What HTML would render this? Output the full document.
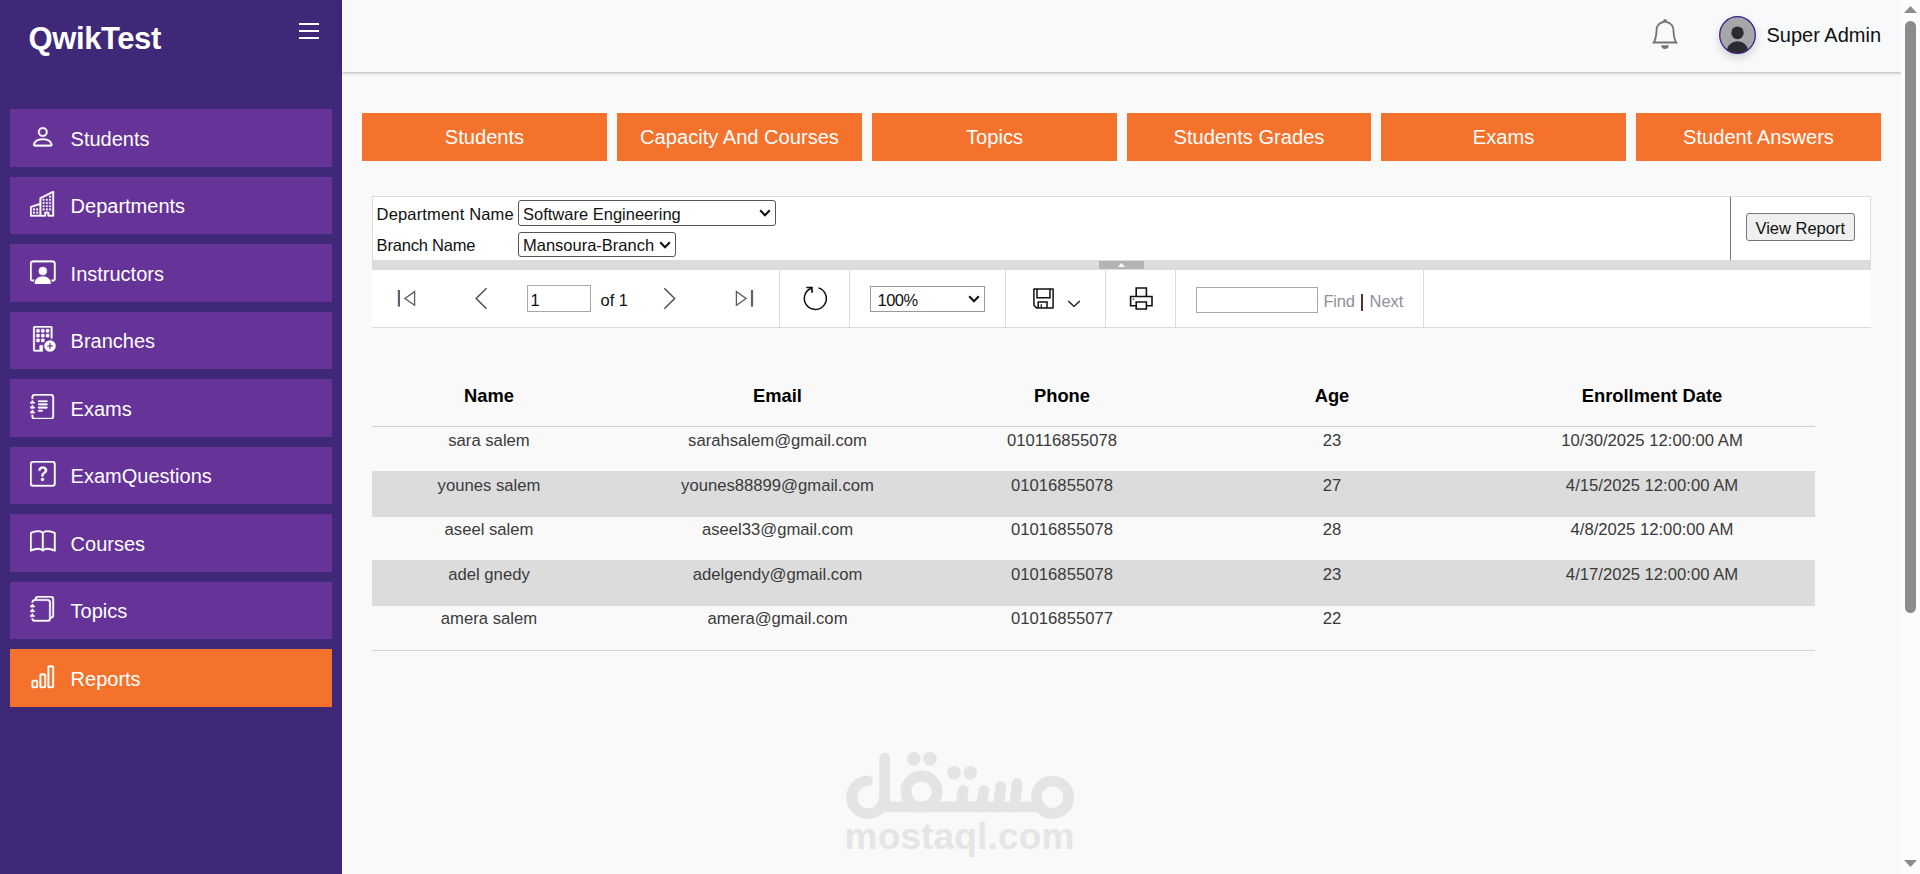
<!DOCTYPE html>
<html lang="en">
<head>
<meta charset="utf-8">
<title>QwikTest - Reports</title>
<style>
*{box-sizing:border-box;margin:0;padding:0}
html,body{width:1920px;height:874px;overflow:hidden;background:#f9f9f9;font-family:"Liberation Sans",sans-serif;}
body{position:relative}
.abs{position:absolute}
/* sidebar */
#side{position:absolute;left:0;top:0;width:342px;height:874px;background:#3f2878}
#logo{position:absolute;left:28.5px;top:20.5px;font-size:31px;letter-spacing:-0.4px;font-weight:bold;color:#fff;line-height:36px;white-space:nowrap}
#burger{position:absolute;left:299px;top:22px;width:20px;height:18px}
.nav{position:absolute;left:10px;width:322px;height:57.5px;background:#663399;color:#fff;font-size:20px;line-height:57.5px;white-space:nowrap}
.nav span{position:absolute;left:60.6px;top:1.5px}
.nav svg{position:absolute;left:20px;top:14.7px;width:25.6px;height:25.6px}
.nav.act{background:#f4722b}
/* header */
#head{position:absolute;left:342px;top:0;width:1560px;height:72px;background:#f8f9fa;box-shadow:0 1px 2px rgba(0,0,0,.16),0 2px 4px rgba(0,0,0,.10)}
#uname{position:absolute;left:1766.5px;top:22px;font-size:20px;line-height:26px;color:#111;white-space:nowrap}
#avatar{position:absolute;left:1377px;top:16px;width:37px;height:38px;border-radius:50%;box-shadow:0 4px 8px rgba(0,0,0,.16)}
#avatar svg{display:block}
/* tabs */
.tab{position:absolute;top:113px;width:245px;height:48px;background:#f4722b;color:#fff;font-size:20.1px;line-height:48px;text-align:center;white-space:nowrap}
/* report viewer */
#params{position:absolute;left:372px;top:196px;width:1499px;height:64px;background:#fff;border:1px solid #dcdcdc;border-bottom:none}
#split{position:absolute;left:372px;top:260px;width:1499px;height:10px;background:#dcdcdc}
#tool{position:absolute;left:372px;top:270px;width:1499px;height:58px;background:#fff;border-bottom:1px solid #dcdcdc}
.lbl{position:absolute;font-size:16.5px;color:#111;white-space:nowrap;line-height:20px}
.rv{font-size:16.5px;color:#111}
.sel{position:absolute;background:#fff;border:1px solid #555;border-radius:3px;font-size:16.5px;color:#111;white-space:nowrap;line-height:20px;padding-left:4px}
.chev{position:absolute;right:3.5px;top:8.3px;width:12px;height:8px}
.tdiv{position:absolute;top:0;width:1px;height:57px;background:#dcdcdc}
/* table */
.row{position:absolute;left:372px;width:1443px;height:45px}
.cell{position:absolute;font-size:16.67px;color:#3a3a3a;white-space:nowrap;text-align:center;transform:translateX(-50%);line-height:20px}
.hd{font-weight:bold;color:#000;font-size:18.33px}
/* scrollbar */
#sb{position:absolute;left:1901px;top:0;width:19px;height:874px;background:#fcfcfc}
</style>
</head>
<body>

<div id="side">
  <div id="logo">QwikTest</div>
  <svg id="burger" viewBox="0 0 20 18"><path d="M0 2h20M0 9h20M0 16h20" stroke="#fff" stroke-width="1.85" fill="none"/></svg>
  <div class="nav" style="top:109px"><svg viewBox="0 0 16 16" fill="#fff" stroke="#fff" stroke-width=".22"><path d="M8 8a3 3 0 1 0 0-6 3 3 0 0 0 0 6Zm2-3a2 2 0 1 1-4 0 2 2 0 0 1 4 0Zm4 8c0 1-1 1-1 1H3s-1 0-1-1 1-4 6-4 6 3 6 4Zm-1-.004c-.001-.246-.154-.986-.832-1.664C11.516 10.68 10.289 10 8 10c-2.29 0-3.516.68-4.168 1.332-.678.678-.83 1.418-.832 1.664h10Z"/></svg><span>Students</span></div>
  <div class="nav" style="top:176.5px"><svg viewBox="0 0 16 16" fill="#fff" stroke="#fff" stroke-width=".22"><path d="M14.763.075A.5.5 0 0 1 15 .5v15a.5.5 0 0 1-.5.5h-3a.5.5 0 0 1-.5-.5V14h-1v1.5a.5.5 0 0 1-.5.5h-9a.5.5 0 0 1-.5-.5V10a.5.5 0 0 1 .342-.474L6 7.64V4.5a.5.5 0 0 1 .276-.447l8-4a.5.5 0 0 1 .487.022ZM6 8.694 1 10.36V15h5V8.694ZM7 15h2v-1.5a.5.5 0 0 1 .5-.5h2a.5.5 0 0 1 .5.5V15h2V1.309l-7 3.5V15Z"/><path d="M2 11h1v1H2v-1Zm2 0h1v1H4v-1Zm-2 2h1v1H2v-1Zm2 0h1v1H4v-1Zm4-4h1v1H8V9Zm2 0h1v1h-1V9Zm-2 2h1v1H8v-1Zm2 0h1v1h-1v-1Zm2-2h1v1h-1V9Zm0 2h1v1h-1v-1ZM8 7h1v1H8V7Zm2 0h1v1h-1V7Zm2 0h1v1h-1V7ZM8 5h1v1H8V5Zm2 0h1v1h-1V5Zm2 0h1v1h-1V5Zm0-2h1v1h-1V3Z"/></svg><span>Departments</span></div>
  <div class="nav" style="top:244px"><svg viewBox="0 0 16 16" fill="#fff" stroke="#fff" stroke-width=".22"><path d="M4 16s-1 0-1-1 1-4 5-4 5 3 5 4-1 1-1 1H4Zm4-5.95a2.5 2.5 0 1 0 0-5 2.5 2.5 0 0 0 0 5Z"/><path d="M2 1a2 2 0 0 0-2 2v9.5A1.5 1.5 0 0 0 1.5 14h.653a5.373 5.373 0 0 1 .68-1H1.5a.5.5 0 0 1-.5-.5V3a1 1 0 0 1 1-1h12a1 1 0 0 1 1 1v9.5a.5.5 0 0 1-.5.5h-1.332c.294.336.522.682.678 1h.654a1.5 1.5 0 0 0 1.5-1.5V3a2 2 0 0 0-2-2H2Z"/></svg><span>Instructors</span></div>
  <div class="nav" style="top:311.5px"><svg viewBox="0 0 16 16" fill="#fff" stroke="#fff" stroke-width=".22"><path d="M12.5 16a3.5 3.5 0 1 0 0-7 3.5 3.5 0 0 0 0 7Zm.5-5v1h1a.5.5 0 0 1 0 1h-1v1a.5.5 0 0 1-1 0v-1h-1a.5.5 0 0 1 0-1h1v-1a.5.5 0 0 1 1 0Z"/><path d="M2 1a1 1 0 0 1 1-1h10a1 1 0 0 1 1 1v6.5a.5.5 0 0 1-1 0V1H3v14h3v-2.5a.5.5 0 0 1 .5-.5H8v4H3a1 1 0 0 1-1-1V1Z"/><path d="M4.5 2a.5.5 0 0 0-.5.5v1a.5.5 0 0 0 .5.5h1a.5.5 0 0 0 .5-.5v-1a.5.5 0 0 0-.5-.5h-1Zm3 0a.5.5 0 0 0-.5.5v1a.5.5 0 0 0 .5.5h1a.5.5 0 0 0 .5-.5v-1a.5.5 0 0 0-.5-.5h-1Zm3 0a.5.5 0 0 0-.5.5v1a.5.5 0 0 0 .5.5h1a.5.5 0 0 0 .5-.5v-1a.5.5 0 0 0-.5-.5h-1Zm-6 3a.5.5 0 0 0-.5.5v1a.5.5 0 0 0 .5.5h1a.5.5 0 0 0 .5-.5v-1a.5.5 0 0 0-.5-.5h-1Zm3 0a.5.5 0 0 0-.5.5v1a.5.5 0 0 0 .5.5h1a.5.5 0 0 0 .5-.5v-1a.5.5 0 0 0-.5-.5h-1Zm3 0a.5.5 0 0 0-.5.5v1a.5.5 0 0 0 .5.5h1a.5.5 0 0 0 .5-.5v-1a.5.5 0 0 0-.5-.5h-1Zm-6 3a.5.5 0 0 0-.5.5v1a.5.5 0 0 0 .5.5h1a.5.5 0 0 0 .5-.5v-1a.5.5 0 0 0-.5-.5h-1Zm3 0a.5.5 0 0 0-.5.5v1a.5.5 0 0 0 .5.5h1a.5.5 0 0 0 .5-.5v-1a.5.5 0 0 0-.5-.5h-1Z"/></svg><span>Branches</span></div>
  <div class="nav" style="top:379px"><svg viewBox="0 0 16 16" fill="#fff" stroke="#fff" stroke-width=".22"><path d="M5 10.5a.5.5 0 0 1 .5-.5h2a.5.5 0 0 1 0 1h-2a.5.5 0 0 1-.5-.5zm0-2a.5.5 0 0 1 .5-.5h5a.5.5 0 0 1 0 1h-5a.5.5 0 0 1-.5-.5zm0-2a.5.5 0 0 1 .5-.5h5a.5.5 0 0 1 0 1h-5a.5.5 0 0 1-.5-.5zm0-2a.5.5 0 0 1 .5-.5h5a.5.5 0 0 1 0 1h-5a.5.5 0 0 1-.5-.5z"/><path d="M3 0h10a2 2 0 0 1 2 2v12a2 2 0 0 1-2 2H3a2 2 0 0 1-2-2v-1h1v1a1 1 0 0 0 1 1h10a1 1 0 0 0 1-1V2a1 1 0 0 0-1-1H3a1 1 0 0 0-1 1v1H1V2a2 2 0 0 1 2-2z"/><path d="M1 5v-.5a.5.5 0 0 1 1 0V5h.5a.5.5 0 0 1 0 1h-2a.5.5 0 0 1 0-1H1zm0 3v-.5a.5.5 0 0 1 1 0V8h.5a.5.5 0 0 1 0 1h-2a.5.5 0 0 1 0-1H1zm0 3v-.5a.5.5 0 0 1 1 0v.5h.5a.5.5 0 0 1 0 1h-2a.5.5 0 0 1 0-1H1z"/></svg><span>Exams</span></div>
  <div class="nav" style="top:446.5px"><svg viewBox="0 0 16 16" fill="#fff" stroke="#fff" stroke-width=".22"><path d="M14 1a1 1 0 0 1 1 1v12a1 1 0 0 1-1 1H2a1 1 0 0 1-1-1V2a1 1 0 0 1 1-1h12zM2 0a2 2 0 0 0-2 2v12a2 2 0 0 0 2 2h12a2 2 0 0 0 2-2V2a2 2 0 0 0-2-2H2z"/><path d="M5.255 5.786a.237.237 0 0 0 .241.247h.825c.138 0 .248-.113.266-.25.09-.656.54-1.134 1.342-1.134.686 0 1.314.343 1.314 1.168 0 .635-.374.927-.965 1.371-.673.489-1.206 1.06-1.168 1.987l.003.217a.25.25 0 0 0 .25.246h.811a.25.25 0 0 0 .25-.25v-.105c0-.718.273-.927 1.01-1.486.609-.463 1.244-.977 1.244-2.056 0-1.511-1.276-2.241-2.673-2.241-1.267 0-2.655.59-2.75 2.286zm1.557 5.763c0 .533.425.927 1.01.927.609 0 1.028-.394 1.028-.927 0-.552-.42-.94-1.029-.94-.584 0-1.009.388-1.009.94z"/></svg><span>ExamQuestions</span></div>
  <div class="nav" style="top:514px"><svg viewBox="0 0 16 16" fill="#fff" stroke="#fff" stroke-width=".22"><path d="M1 2.828c.885-.37 2.154-.769 3.388-.893 1.33-.134 2.458.063 3.112.752v9.746c-.935-.53-2.12-.603-3.213-.493-1.18.12-2.37.461-3.287.811V2.828zm7.5-.141c.654-.689 1.782-.886 3.112-.752 1.234.124 2.503.523 3.388.893v9.923c-.918-.35-2.107-.692-3.287-.81-1.094-.111-2.278-.039-3.213.492V2.687zM8 1.783C7.015.936 5.587.81 4.287.94c-1.514.153-3.042.672-3.994 1.105A.5.5 0 0 0 0 2.5v11a.5.5 0 0 0 .707.455c.882-.4 2.303-.881 3.68-1.02 1.409-.142 2.59.087 3.223.877a.5.5 0 0 0 .78 0c.633-.79 1.814-1.019 3.222-.877 1.378.139 2.8.62 3.681 1.02A.5.5 0 0 0 16 13.5v-11a.5.5 0 0 0-.293-.455c-.952-.433-2.48-.952-3.994-1.105C10.413.809 8.985.936 8 1.783z"/></svg><span>Courses</span></div>
  <div class="nav" style="top:581.5px"><svg viewBox="0 0 16 16" fill="#fff" stroke="#fff" stroke-width=".22"><path d="M5 0h8a2 2 0 0 1 2 2v10a2 2 0 0 1-2 2 2 2 0 0 1-2 2H3a2 2 0 0 1-2-2h1a1 1 0 0 0 1 1h8a1 1 0 0 0 1-1V4a1 1 0 0 0-1-1H3a1 1 0 0 0-1 1H1a2 2 0 0 1 2-2h8a2 2 0 0 1 2 2v9a1 1 0 0 0 1-1V2a1 1 0 0 0-1-1H5a1 1 0 0 0-1 1H3a2 2 0 0 1 2-2z"/><path d="M1 6v-.5a.5.5 0 0 1 1 0V6h.5a.5.5 0 0 1 0 1h-2a.5.5 0 0 1 0-1H1zm0 3v-.5a.5.5 0 0 1 1 0V9h.5a.5.5 0 0 1 0 1h-2a.5.5 0 0 1 0-1H1zm0 2.5v.5H.5a.5.5 0 0 0 0 1h2a.5.5 0 0 0 0-1H2v-.5a.5.5 0 0 0-1 0z"/></svg><span>Topics</span></div>
  <div class="nav act" style="top:649px"><svg viewBox="0 0 16 16" fill="#fff" stroke="#fff" stroke-width=".22"><path d="M4 11H2v3h2v-3zm5-4H7v7h2V7zm5-5v12h-2V2h2zm-2-1a1 1 0 0 0-1 1v12a1 1 0 0 0 1 1h2a1 1 0 0 0 1-1V2a1 1 0 0 0-1-1h-2zM6 7a1 1 0 0 1 1-1h2a1 1 0 0 1 1 1v7a1 1 0 0 1-1 1H7a1 1 0 0 1-1-1V7zm-5 4a1 1 0 0 1 1-1h2a1 1 0 0 1 1 1v3a1 1 0 0 1-1 1H2a1 1 0 0 1-1-1v-3z"/></svg><span>Reports</span></div>
</div>

<div id="head">
  <svg class="abs" style="left:1307.8px;top:19px;width:30px;height:30px" viewBox="0 0 16 16" fill="#757575"><path d="M8 16a2 2 0 0 0 2-2H6a2 2 0 0 0 2 2zM8 1.918l-.797.161A4.002 4.002 0 0 0 4 6c0 .628-.134 2.197-.459 3.742-.16.767-.376 1.566-.663 2.258h10.244c-.287-.692-.502-1.49-.663-2.258C12.134 8.197 12 6.628 12 6a4.002 4.002 0 0 0-3.203-3.92L8 1.917zM14.22 12c.223.447.481.801.78 1H1c.299-.199.557-.553.78-1C2.68 10.2 3 6.88 3 6c0-2.42 1.72-4.44 4.005-4.901a1 1 0 1 1 1.99 0A5.002 5.002 0 0 1 13 6c0 .88.32 4.2 1.22 6z"/></svg>
  <div id="avatar"><svg viewBox="0 0 38 38" width="37" height="38" preserveAspectRatio="none"><defs><clipPath id="avc"><circle cx="19" cy="19" r="18"/></clipPath></defs><circle cx="19" cy="19" r="18.3" fill="#a6a5a8" stroke="#3d1d8a" stroke-width="1.3"/><g clip-path="url(#avc)" fill="#2b2a33"><circle cx="19" cy="16.8" r="6.4"/><ellipse cx="19" cy="34.5" rx="10.8" ry="9.2"/></g></svg></div>
</div>
<div id="uname">Super Admin</div>

<div class="tab" style="left:362px">Students</div>
<div class="tab" style="left:617px">Capacity And Courses</div>
<div class="tab" style="left:872px">Topics</div>
<div class="tab" style="left:1127px;width:244px">Students Grades</div>
<div class="tab" style="left:1381px">Exams</div>
<div class="tab" style="left:1636px">Student Answers</div>

<div id="params">
  <div class="lbl" style="left:3.6px;top:7px;letter-spacing:0.16px">Department Name</div>
  <div class="lbl" style="left:3.6px;top:37.5px;letter-spacing:-0.2px">Branch Name</div>
  <div class="sel" style="left:145px;top:3.2px;width:257.5px;height:25.4px;line-height:23.5px;padding-top:2.1px">Software Engineering<svg class="chev" viewBox="0 0 12 8"><path d="M1.2 1.3 6 6.2l4.8-4.9" fill="none" stroke="#111" stroke-width="2.1"/></svg></div>
  <div class="sel" style="left:145px;top:34.5px;width:157.5px;height:25.2px;line-height:23.3px;padding-top:1.3px">Mansoura-Branch<svg class="chev" viewBox="0 0 12 8"><path d="M1.2 1.3 6 6.2l4.8-4.9" fill="none" stroke="#111" stroke-width="2.1"/></svg></div>
  <div class="abs" style="left:1357px;top:0;width:1px;height:63px;background:#777"></div>
  <div class="abs rv" style="left:1373px;top:16px;width:108.5px;height:28px;border:1px solid #767676;border-radius:3px;background:#efefef;line-height:28px;text-align:center;white-space:nowrap">View Report</div>
</div>
<div id="split"><div class="abs" style="left:727px;top:1px;width:45px;height:8px;background:#b4b4b4;background-image:radial-gradient(#cfcfcf 0.6px,transparent 0.7px);background-size:2px 2px"><svg class="abs" style="left:19px;top:2px" width="7" height="4" viewBox="0 0 7 4"><path d="M0 4 3.5 0 7 4z" fill="#fff"/></svg></div></div>
<div id="tool">
  <svg class="abs" style="left:24px;top:18px" width="22" height="22" viewBox="0 0 22 22" fill="none" stroke="#5c5c63" stroke-width="1.3"><path d="M2.9 2v16.6" stroke-width="2.2" stroke="#5e6072"/><path d="M18.6 3.6V17.3L8.9 10.45z"/></svg>
  <svg class="abs" style="left:100px;top:16px" width="20" height="26" viewBox="0 0 20 26" fill="none" stroke="#555" stroke-width="1.6"><path d="M14.5 2.2 4.2 12.45 14.5 22.7"/></svg>
  <div class="abs rv" style="left:155px;top:15px;width:64px;height:27px;border:1px solid #a9a9a9;background:#fff;line-height:28px;padding-left:2.5px">1</div>
  <div class="lbl" style="left:228.5px;top:19.5px">of 1</div>
  <svg class="abs" style="left:288px;top:16px" width="20" height="26" viewBox="0 0 20 26" fill="none" stroke="#555" stroke-width="1.6"><path d="M4.3 2.2 14.6 12.45 4.3 22.7"/></svg>
  <svg class="abs" style="left:361px;top:18px" width="22" height="22" viewBox="0 0 22 22" fill="none" stroke="#5c5c63" stroke-width="1.3"><path d="M19 2v16.6" stroke-width="2.2" stroke="#5e6072"/><path d="M3.4 3.6V17.3L13.1 10.45z"/></svg>
  <div class="tdiv" style="left:407px"></div>
  <svg class="abs" style="left:430px;top:15px" width="28" height="28" viewBox="0 0 28 28" fill="none" stroke="#111" stroke-width="1.5"><path d="M16.5 2.9A11 11 0 1 1 9.3 3.2"/><path d="M4.3 2.5H10V7.7" stroke-width="1.7"/></svg>
  <div class="tdiv" style="left:477px"></div>
  <div class="abs rv" style="left:498px;top:16px;width:115px;height:26px;border:1px solid #999;background:#fff;line-height:27px;padding-left:6.5px;letter-spacing:-0.55px">100%<svg class="chev" style="top:8.2px;right:4.2px" viewBox="0 0 12 8"><path d="M1.2 1.3 6 6.2l4.8-4.9" fill="none" stroke="#111" stroke-width="2.1"/></svg></div>
  <div class="tdiv" style="left:633px"></div>
  <svg class="abs" style="left:660px;top:17px" width="24" height="24" viewBox="0 0 24 24" fill="none" stroke="#111" stroke-width="1.5" stroke-linejoin="round"><path d="M1.9 1.9H21.1V21.1H4.7L1.9 18.3z"/><path d="M5 2V10.8H18V2" stroke-linejoin="miter"/><path d="M6.2 21V15H15V21" stroke-linejoin="miter"/><path d="M9.3 17.3V21" stroke-width="1.2"/></svg>
  <svg class="abs" style="left:695px;top:30px" width="14" height="8" viewBox="0 0 14 8" fill="none" stroke="#111" stroke-width="1.3"><path d="M1.2 1.1 7 6.4 12.8 1.1"/></svg>
  <div class="tdiv" style="left:733px"></div>
  <svg class="abs" style="left:756px;top:15px" width="26" height="26" viewBox="0 0 26 26" fill="none" stroke="#111" stroke-width="1.6"><path d="M8.2 11.5V3H18.4v8.5"/><path d="M8.2 20.8H2.6V11.5H24v9.300H18.4"/><path d="M8.2 17H18.4v7H8.200z"/><circle cx="5.5" cy="14.3" r=".8" fill="#111" stroke="none"/></svg>
  <div class="tdiv" style="left:803px"></div>
  <div class="abs" style="left:824px;top:17px;width:122px;height:26px;border:1px solid #a9a9a9;background:#fff"></div>
  <div class="lbl" style="left:951.5px;top:21px;color:#8e9098;letter-spacing:-0.25px">Find</div>
  <div class="abs" style="left:989.3px;top:24px;width:1.7px;height:16.5px;background:#503434"></div>
  <div class="lbl" style="left:997.5px;top:21px;color:#8e9098">Next</div>
  <div class="tdiv" style="left:1051px"></div>
</div>

<div id="tbl">
<div class="abs" style="left:372px;top:426px;width:1443px;height:1px;background:#cfcfcf"></div>
<div class="abs" style="left:372px;top:471px;width:1443px;height:45.5px;background:#dcdcdc"></div>
<div class="abs" style="left:372px;top:560.3px;width:1443px;height:45.4px;background:#dcdcdc"></div>
<div class="abs" style="left:372px;top:650px;width:1443px;height:1px;background:#d4d4d4"></div>
<div class="cell hd" style="left:489px;top:386.1px">Name</div>
<div class="cell hd" style="left:777.5px;top:386.1px">Email</div>
<div class="cell hd" style="left:1062px;top:386.1px">Phone</div>
<div class="cell hd" style="left:1332px;top:386.1px">Age</div>
<div class="cell hd" style="left:1652px;top:386.1px">Enrollment Date</div>
<div class="cell" style="left:489px;top:431.2px">sara salem</div>
<div class="cell" style="left:777.5px;top:431.2px">sarahsalem@gmail.com</div>
<div class="cell" style="left:1062px;top:431.2px">010116855078</div>
<div class="cell" style="left:1332px;top:431.2px">23</div>
<div class="cell" style="left:1652px;top:431.2px">10/30/2025 12:00:00 AM</div>
<div class="cell" style="left:489px;top:475.7px">younes salem</div>
<div class="cell" style="left:777.5px;top:475.7px">younes88899@gmail.com</div>
<div class="cell" style="left:1062px;top:475.7px">01016855078</div>
<div class="cell" style="left:1332px;top:475.7px">27</div>
<div class="cell" style="left:1652px;top:475.7px">4/15/2025 12:00:00 AM</div>
<div class="cell" style="left:489px;top:520.2px">aseel salem</div>
<div class="cell" style="left:777.5px;top:520.2px">aseel33@gmail.com</div>
<div class="cell" style="left:1062px;top:520.2px">01016855078</div>
<div class="cell" style="left:1332px;top:520.2px">28</div>
<div class="cell" style="left:1652px;top:520.2px">4/8/2025 12:00:00 AM</div>
<div class="cell" style="left:489px;top:564.7px">adel gnedy</div>
<div class="cell" style="left:777.5px;top:564.7px">adelgendy@gmail.com</div>
<div class="cell" style="left:1062px;top:564.7px">01016855078</div>
<div class="cell" style="left:1332px;top:564.7px">23</div>
<div class="cell" style="left:1652px;top:564.7px">4/17/2025 12:00:00 AM</div>
<div class="cell" style="left:489px;top:609.2px">amera salem</div>
<div class="cell" style="left:777.5px;top:609.2px">amera@gmail.com</div>
<div class="cell" style="left:1062px;top:609.2px">01016855077</div>
<div class="cell" style="left:1332px;top:609.2px">22</div>
</div>

<svg id="wm" class="abs" style="left:840px;top:745px" width="240" height="80" viewBox="0 0 240 80" fill="none" stroke="#e4e4e4" stroke-width="10.8" stroke-linecap="round"><circle cx="212.5" cy="52.2" r="16.1"/><circle cx="81.5" cy="46.6" r="15.6"/><path d="M41.0 61.9 H200.0"/><path d="M44.7 12.8 V61.9"/><path d="M27.5 35.9 A16.4 16.4 0 1 0 44.5 52.2"/><path d="M123.3 45.4 L120.7 61.9"/><path d="M143.9 45.4 L141.3 61.9"/><path d="M160.8 41.6 L158.2 61.9"/><path d="M177.1 38.5 L174.5 61.9"/><circle cx="114.0" cy="27.8" r="6.9" fill="#e4e4e4" stroke="none"/><circle cx="130.2" cy="27.8" r="6.9" fill="#e4e4e4" stroke="none"/><circle cx="73.8" cy="13.8" r="6.9" fill="#e4e4e4" stroke="none"/><circle cx="90.0" cy="13.8" r="6.9" fill="#e4e4e4" stroke="none"/></svg>
<div class="abs" style="left:844.6px;top:815.5px;font-size:37px;font-weight:bold;color:#e5e5e5;letter-spacing:0.15px;line-height:42px;white-space:nowrap">mostaql.com</div>

<div id="sb">
  <svg class="abs" style="left:3px;top:6px" width="13" height="7" viewBox="0 0 13 7"><path d="M0 7 6.5 0 13 7z" fill="#8b8b8b"/></svg>
  <div class="abs" style="left:4px;top:21px;width:11px;height:592px;border-radius:5.5px;background:#8b8b8b"></div>
  <svg class="abs" style="left:3px;top:860px" width="13" height="7" viewBox="0 0 13 7"><path d="M0 0 6.5 7 13 0z" fill="#8b8b8b"/></svg>
</div>

</body>
</html>
